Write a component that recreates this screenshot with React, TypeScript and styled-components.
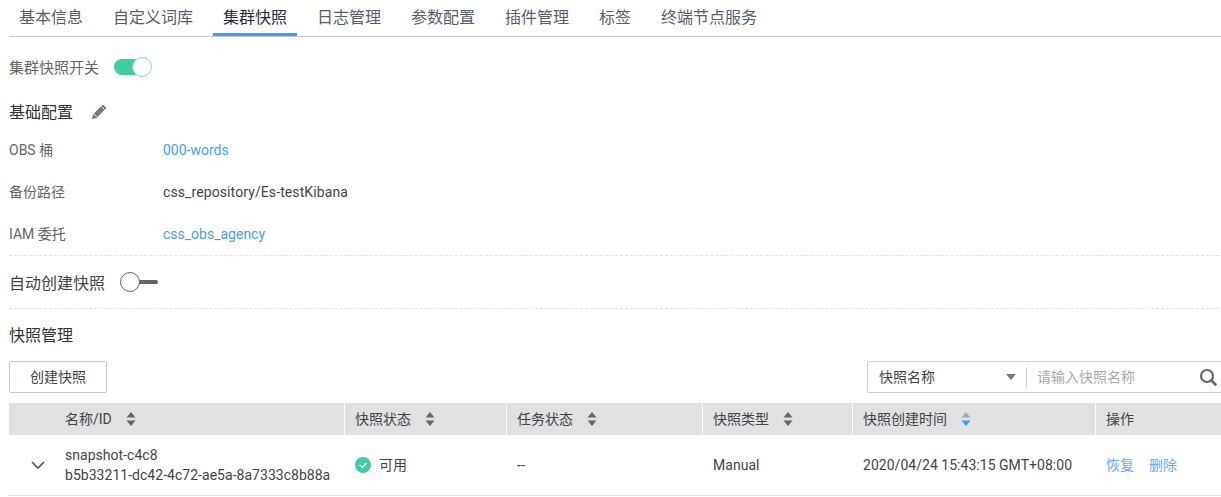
import React from "react";
import styled, { createGlobalStyle } from "styled-components";

const Global = createGlobalStyle`
  html, body { margin: 0; padding: 0; background: #fff; }
  body { font-family: Roboto, "Noto Sans CJK SC", "Liberation Sans", sans-serif; color: #333; width: 1221px; height: 497px; overflow: hidden; }
`;

const Page = styled.div`
  width: 1221px;
  padding-left: 9px;
  box-sizing: border-box;
`;
const Tabs = styled.div`
  display: flex;
  gap: 10px;
  height: 37px;
  box-sizing: border-box;
  border-bottom: 1px solid #c8c8c8;
`;
const Tab = styled.div<{ $active?: boolean }>`
  padding: 0 10px;
  height: 36px;
  box-sizing: border-box;
  line-height: 35px;
  font-size: 16px;
  color: ${(p) => (p.$active ? "#252b3a" : "#575d6c")};
  border-bottom: 3px solid ${(p) => (p.$active ? "#3c9bff" : "transparent")};
`;
const SwitchRow = styled.div`
  display: flex;
  align-items: center;
  height: 20px;
  margin-top: 20px;
  font-size: 15px;
  color: #666;
`;
const CjkText = styled.span`
  padding-bottom: 2px;
`;
const OnSwitch = styled.div`
  position: relative;
  width: 38px;
  height: 16px;
  margin-left: 15px;
  &::before {
    content: "";
    position: absolute;
    left: 0;
    top: 0;
    width: 28px;
    height: 16px;
    border-radius: 8px 0 0 8px;
    background: #3fcca6;
  }
  &::after {
    content: "";
    position: absolute;
    right: 0;
    top: -2px;
    width: 20px;
    height: 20px;
    box-sizing: border-box;
    border-radius: 50%;
    background: #fff;
    border: 1px solid #7fdcc3;
  }
`;
const SectionTitle = styled.div<{ $gap: number }>`
  display: flex;
  align-items: center;
  height: 24px;
  margin-top: ${(p) => p.$gap}px;
  font-size: 16px;
  color: #333;
`;
const Pencil = styled.svg`
  width: 18px;
  height: 18px;
  margin-left: 17px;
  margin-top: -2px;
`;
const InfoList = styled.div`
  margin-top: 5px;
`;
const InfoRow = styled.div`
  display: flex;
  align-items: center;
  height: 42px;
  font-size: 14px;
`;
const InfoLabel = styled.div`
  width: 154px;
  padding-bottom: 2px;
  color: #666;
`;
const InfoValue = styled.div`
  color: #444;
  letter-spacing: 0.1px;
`;
const InfoLink = styled.a`
  color: #4a9cf8;
`;
const AutoRow = styled.div`
  display: flex;
  align-items: center;
  height: 54px;
  box-sizing: border-box;
  border-top: 1px dashed #e4e4e4;
  border-bottom: 1px dashed #e4e4e4;
  font-size: 16px;
  color: #444;
  margin-right: 2px;
`;
const OffSwitch = styled.div`
  position: relative;
  width: 38px;
  height: 20px;
  margin-left: 15px;
  &::before {
    content: "";
    position: absolute;
    right: 0;
    top: 8px;
    width: 20px;
    height: 4px;
    border-radius: 2px;
    background: #666;
  }
  &::after {
    content: "";
    position: absolute;
    left: 0;
    top: 0;
    width: 20px;
    height: 20px;
    box-sizing: border-box;
    border-radius: 50%;
    background: #fff;
    border: 1px solid #666;
  }
`;
const Toolbar = styled.div`
  display: flex;
  justify-content: space-between;
  align-items: flex-start;
  margin-top: 14px;
`;
const Button = styled.button`
  width: 98px;
  height: 32px;
  padding: 0 0 2px;
  background: #fff;
  border: 1px solid #c8c8c8;
  border-radius: 2px;
  font: inherit;
  font-size: 14px;
  color: #444;
`;
const SearchBox = styled.div`
  display: flex;
  align-items: center;
  width: 354px;
  height: 32px;
  box-sizing: border-box;
  border: 1px solid #cfcfcf;
  border-right: none;
  border-radius: 2px 0 0 2px;
  font-size: 14px;
`;
const SelectText = styled.div`
  width: 127px;
  padding: 0 0 2px 11px;
  color: #444;
`;
const Caret = styled.div`
  width: 0;
  height: 0;
  border-left: 5px solid transparent;
  border-right: 5px solid transparent;
  border-top: 6px solid #777;
`;
const Divider = styled.div`
  width: 1px;
  height: 20px;
  background: #cfcfcf;
  margin-left: 10px;
`;
const Placeholder = styled.div`
  flex: 1;
  padding: 0 0 2px 10px;
  color: #aaa;
`;
const SearchIcon = styled.svg`
  width: 18px;
  height: 18px;
  margin-right: 4px;
`;
const Table = styled.div`
  margin-top: 10px;
  font-size: 14px;
`;
const grid = `
  display: grid;
  grid-template-columns: 336px 162px 196px 150px 243px 125px;
`;
const HeadRow = styled.div`
  ${grid}
  height: 32px;
`;
const HeadCell = styled.div<{ $first?: boolean }>`
  display: flex;
  align-items: center;
  background: #dfe1e2;
  color: #444;
  margin-right: 1px;
  padding-left: ${(p) => (p.$first ? "56px" : "10px")};
  white-space: nowrap;
  &:last-child { margin-right: 0; }
`;
const Sort = styled.svg`
  width: 10px;
  height: 14px;
  margin-left: 14px;
`;
const BodyRow = styled.div`
  ${grid}
  height: 61px;
  box-sizing: border-box;
  border-bottom: 1px solid #e4e4e4;
  color: #444;
`;
const BodyCell = styled.div`
  display: flex;
  align-items: center;
  padding-left: 10px;
  white-space: nowrap;
  letter-spacing: 0.03px;
`;
const NameCell = styled.div`
  display: flex;
  align-items: center;
  line-height: 20px;
  letter-spacing: 0.03px;
`;
const Chevron = styled.svg`
  width: 16px;
  height: 10px;
  margin: 0 19px 0 21px;
`;
const CheckIcon = styled.svg`
  width: 16px;
  height: 16px;
  margin-right: 8px;
`;
const Action = styled.a`
  color: #6aa8f8;
  margin-right: 15px;
  padding-bottom: 2px;
`;

function SortIcon({ active }: { active?: boolean }) {
  return (
    <Sort viewBox="0 0 10 14">
      <path d="M5 0 L9.5 5.5 H0.5 Z" fill={active ? "#aaa" : "#666"} />
      <path d="M5 14 L9.5 8.5 H0.5 Z" fill={active ? "#3c9bff" : "#666"} />
    </Sort>
  );
}

function Head({ label, first, active, plain }: { label: string; first?: boolean; active?: boolean; plain?: boolean }) {
  return (
    <HeadCell $first={first}>
      <CjkText>{label}</CjkText>
      {!plain && <SortIcon active={active} />}
    </HeadCell>
  );
}

export default function App() {
  return (
    <Page>
      <Global />
      <Tabs>
        {["基本信息", "自定义词库", "集群快照", "日志管理", "参数配置", "插件管理", "标签", "终端节点服务"].map((t) => (
          <Tab key={t} $active={t === "集群快照"}>{t}</Tab>
        ))}
      </Tabs>
      <SwitchRow>
        <CjkText>集群快照开关</CjkText>
        <OnSwitch />
      </SwitchRow>
      <SectionTitle $gap={23}>
        <CjkText>基础配置</CjkText>
        <Pencil viewBox="0 0 18 18">
          <path d="M2 17 L3 12.4 L12.9 2.5 L16.4 6 L6.5 15.9 Z" fill="#777" />
          <path d="M3.8 12 L6.9 15.1" stroke="#fff" strokeWidth="1" />
          <path d="M11.4 4.4 L14.5 7.5" stroke="#fff" strokeWidth="1" />
        </Pencil>
      </SectionTitle>
      <InfoList>
        <InfoRow><InfoLabel>OBS 桶</InfoLabel><InfoLink>000-words</InfoLink></InfoRow>
        <InfoRow><InfoLabel>备份路径</InfoLabel><InfoValue>css_repository/Es-testKibana</InfoValue></InfoRow>
        <InfoRow><InfoLabel>IAM 委托</InfoLabel><InfoLink>css_obs_agency</InfoLink></InfoRow>
      </InfoList>
      <AutoRow>
        自动创建快照
        <OffSwitch />
      </AutoRow>
      <SectionTitle $gap={14}>
        <CjkText>快照管理</CjkText>
      </SectionTitle>
      <Toolbar>
        <Button>创建快照</Button>
        <SearchBox>
          <SelectText>快照名称</SelectText>
          <Caret />
          <Divider />
          <Placeholder>请输入快照名称</Placeholder>
          <SearchIcon viewBox="0 0 18 18">
            <circle cx="8" cy="8" r="6" fill="none" stroke="#666" strokeWidth="2.2" />
            <path d="M12.5 12.5 L16.5 16.5" stroke="#666" strokeWidth="2.6" strokeLinecap="round" />
          </SearchIcon>
        </SearchBox>
      </Toolbar>
      <Table>
        <HeadRow>
          <Head label="名称/ID" first />
          <Head label="快照状态" />
          <Head label="任务状态" />
          <Head label="快照类型" />
          <Head label="快照创建时间" active />
          <Head label="操作" plain />
        </HeadRow>
        <BodyRow>
          <NameCell>
            <Chevron viewBox="0 0 16 10">
              <path d="M2 2 L8 8 L14 2" fill="none" stroke="#555" strokeWidth="1.6" />
            </Chevron>
            <div>
              <div>snapshot-c4c8</div>
              <div>b5b33211-dc42-4c72-ae5a-8a7333c8b88a</div>
            </div>
          </NameCell>
          <BodyCell>
            <CheckIcon viewBox="0 0 16 16">
              <circle cx="8" cy="8" r="8" fill="#3fcca6" />
              <path d="M4.6 8 L7.2 10.4 L11.4 6" fill="none" stroke="#fff" strokeWidth="1.4" />
            </CheckIcon>
            <CjkText>可用</CjkText>
          </BodyCell>
          <BodyCell>--</BodyCell>
          <BodyCell>Manual</BodyCell>
          <BodyCell>2020/04/24 15:43:15 GMT+08:00</BodyCell>
          <BodyCell>
            <Action>恢复</Action>
            <Action>删除</Action>
          </BodyCell>
        </BodyRow>
      </Table>
    </Page>
  );
}
